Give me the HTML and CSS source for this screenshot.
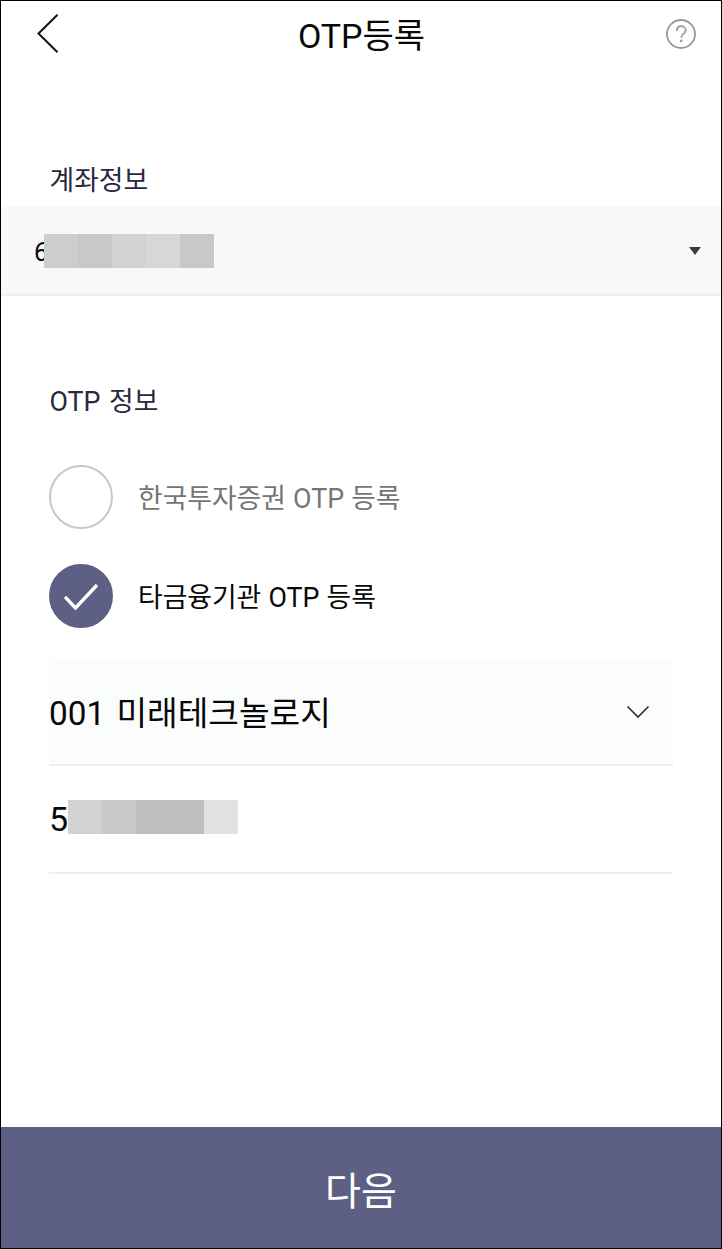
FILE: index.html
```html
<!DOCTYPE html>
<html lang="ko">
<head>
    <meta charset="UTF-8">
    <meta name="viewport" content="width=device-width, initial-scale=1.0">
    <title>OTP등록</title>
    <link rel="stylesheet" href="styles.css">
</head>
<body>
    <div class="app">
        <!-- Header -->
        <header class="header">
            <button class="icon-button" aria-label="뒤로">
                <svg width="24" height="40" viewBox="0 0 24 40" fill="none" stroke="#111" stroke-width="2">
                    <path d="M21.5 .8 2.5 19.5l19 18.7"/>
                </svg>
            </button>
            <h1 class="title">OTP등록</h1>
            <button class="icon-button" aria-label="도움말">
                <svg width="32" height="32" viewBox="0 0 32 32" fill="none" stroke="#999" stroke-width="1.8">
                    <circle cx="16" cy="16" r="14"/>
                    <path d="M11.8 13c0-2.9 1.8-4.8 4.4-4.8 2.5 0 4.5 1.6 4.5 4.1 0 3.6-4.5 3.6-4.5 7.4"/>
                    <circle cx="16.2" cy="22.9" r="1.3" fill="#999" stroke="none"/>
                </svg>
            </button>
        </header>

        <main class="content">
            <!-- Account -->
            <h2 class="section-title account-title">계좌정보</h2>
            <div class="account-select">
                <span class="account-number">6</span>
                <div class="mask">
                    <i class="g3"></i><i class="g2"></i><i class="g4"></i><i class="g5"></i><i class="g2"></i>
                </div>
                <span class="caret"></span>
            </div>

            <!-- OTP -->
            <h2 class="section-title otp-title">OTP 정보</h2>
            <div class="options">
                <label class="option">
                    <span class="radio"></span>
                    <span class="option-text">한국투자증권 OTP 등록</span>
                </label>
                <label class="option selected">
                    <span class="radio">
                        <svg width="36" height="28" viewBox="0 0 36 28" fill="none" stroke="#fff" stroke-width="3.4">
                            <path d="M2 14.8 12.5 26 34 3"/>
                        </svg>
                    </span>
                    <span class="option-text">타금융기관 OTP 등록</span>
                </label>
            </div>

            <div class="field vendor">
                <span>001 미래테크놀로지</span>
                <svg class="chevron" width="24" height="14" viewBox="0 0 24 14" fill="none" stroke="#333" stroke-width="1.7">
                    <path d="M1.5 1.5 12 12 22.5 1.5"/>
                </svg>
            </div>
            <div class="field serial">
                <span>5</span>
                <div class="mask">
                    <i class="g4"></i><i class="g2"></i><i class="g1"></i><i class="g1"></i><i class="g6"></i>
                </div>
            </div>
        </main>

        <button class="next-button">다음</button>
    </div>
</body>
</html>
```
FILE: styles.css
```css
:root {
    --navy: #5d5f84;
    --line: #efeff0;
}

* {
    box-sizing: border-box;
}

body {
    margin: 0;
    font-family: Roboto, "Noto Sans CJK KR", sans-serif;
    background: #fff;
    color: #080808;
}

button {
    padding: 0;
    border: none;
    background: none;
    font-family: inherit;
}

.app {
    display: flex;
    flex-direction: column;
    height: 1249px;
    border: 1px solid #000;
    overflow: hidden;
}

/* Header */
.header {
    display: flex;
    justify-content: space-between;
    align-items: center;
    height: 66px;
    padding: 0 24px 0 35px;
}

.icon-button {
    display: flex;
}

.title {
    margin: 4px 2px 0 0;
    font-size: 34px;
    font-weight: 400;
    line-height: 44px;
}

.content {
    flex: 1;
}

.section-title {
    margin: 0 0 0 48.5px;
    font-size: 26.8px;
    font-weight: 400;
    line-height: 40px;
    color: #282840;
    word-spacing: 2px;
}

.account-title {
    padding-top: 94px;
}

/* Account select */
.account-select {
    display: flex;
    align-items: center;
    height: 89px;
    margin-top: 6px;
    padding: 0 20px 0 33px;
    background: #f8f8fb;
    border-bottom: 2px solid var(--line);
}

.account-number {
    width: 10px;
    font-size: 25px;
    line-height: 34px;
    padding-top: 4px;
}

.caret {
    margin-left: auto;
    border: 6px solid transparent;
    border-top: 8px solid #3c3c3e;
    border-bottom: none;
}

.mask {
    position: relative;
    display: flex;
}

.mask i {
    width: 34px;
    height: 34px;
}

.g1 { background: #bebebe; }
.g2 { background: #c8c8c9; }
.g3 { background: #cdcdce; }
.g4 { background: #d2d2d3; }
.g5 { background: #d7d7d8; }
.g6 { background: #e1e1e1; }

/* OTP options */
.otp-title {
    margin-top: 86px;
}

.options {
    display: flex;
    flex-direction: column;
    gap: 35px;
    margin: 43px 0 0 48px;
}

.option {
    display: flex;
    align-items: center;
    gap: 25px;
    height: 64px;
    font-size: 26.8px;
    color: #757575;
    word-spacing: 0.5px;
}

.option-text {
    padding-bottom: 1px;
}

.option.selected {
    color: #080808;
}

.radio {
    display: flex;
    align-items: center;
    justify-content: center;
    width: 64px;
    height: 64px;
    border: 2px solid #c8c8c8;
    border-radius: 50%;
}

.selected .radio {
    background: var(--navy);
    border-color: var(--navy);
}

/* Fields */
.field {
    display: flex;
    align-items: center;
    height: 108px;
    margin: 0 48px;
    border-bottom: 2px solid var(--line);
    font-size: 34px;
}

.vendor {
    margin-top: 30px;
    padding-bottom: 2px;
    background: #fbfdfc;
    font-size: 33.3px;
    word-spacing: 3px;
}

.chevron {
    margin: 4px 23px 0 auto;
}

.serial .mask {
    margin-bottom: 4px;
}

.next-button {
    height: 121px;
    padding-top: 1px;
    background: var(--navy);
    color: #fff;
    font-size: 39px;
}
```
